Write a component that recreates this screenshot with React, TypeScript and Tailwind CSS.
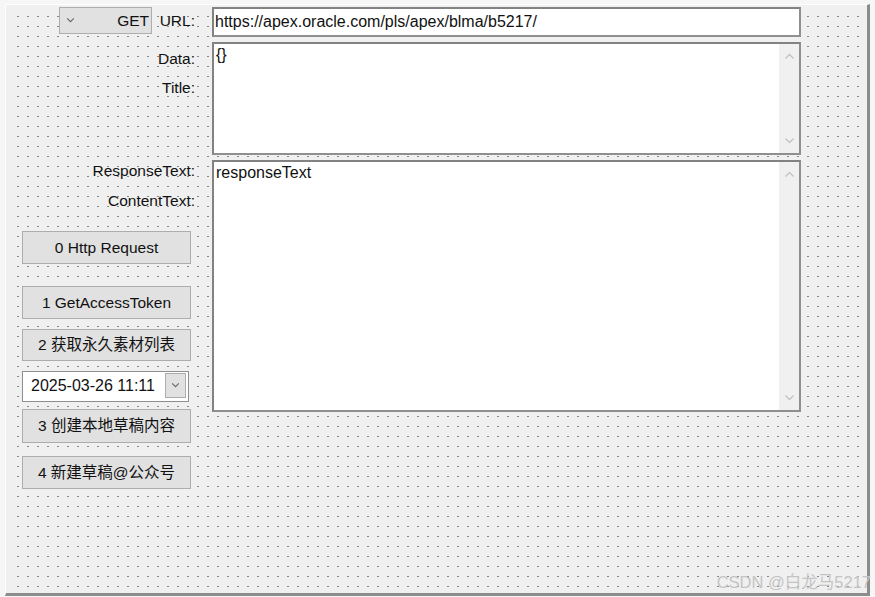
import React from 'react';

// Delphi-style form designer canvas

function Chevron({ up = false, className = '' }: { up?: boolean; className?: string }) {
    return (
        <svg viewBox="0 0 10 6" className={className} fill="none" stroke="currentColor" strokeWidth="1.3">
            {up ? <path d="M1 5.5 L5 1.5 L9 5.5" /> : <path d="M1 0.5 L5 4.5 L9 0.5" />}
        </svg>
    );
}

function Label({ text, className = '' }: { text: string; className?: string }) {
    return <div className={`h-[20px] text-right leading-[20px] ${className}`}>{text}</div>;
}

function Button({ text, className = '' }: { text: string; className?: string }) {
    return (
        <div
            className={`flex w-[169px] items-center justify-center border border-[#adadad] bg-[#e1e1e1] ${className}`}
        >
            {text}
        </div>
    );
}

function Memo({ text, className = '' }: { text: string; className?: string }) {
    return (
        <div
            className={`flex border-2 border-[#8f8f8f] border-t-[#828282] border-l-[#828282] bg-white ${className}`}
        >
            <div className="flex-1 pl-[2px] pt-[2px] text-[16px] leading-[18px]">{text}</div>
            <div className="flex w-[20px] flex-col items-center justify-between bg-[#f0f0f0] py-[9px] text-[#c2c2c2]">
                <Chevron up className="h-[6px] w-[11px]" />
                <Chevron className="h-[6px] w-[11px]" />
            </div>
        </div>
    );
}

export default function App() {
    return (
        <div className="relative h-[597px] w-[875px] bg-[#f6f6f6] pl-[5px] pt-[4px] font-['Liberation_Sans','Noto_Sans_CJK_SC',sans-serif] text-[15.5px] text-[#111111]">
            <div className="flex h-[592px] w-[865px] gap-[17px] border-l border-t border-r-[3px] border-b-[3px] border-l-white border-t-white border-r-[#8c8c8c] border-b-[#8c8c8c] pl-[16px] pt-[2px] [background:linear-gradient(#f0f0f0,#f0f0f0)_0_0/11px_100%_no-repeat,linear-gradient(#f0f0f0,#f0f0f0)_0_0/100%_11px_no-repeat,conic-gradient(from_270deg_at_2px_1px,#888888_90deg,transparent_0)_11px_11px/10px_10px,#f0f0f0]">
                {/* Left column */}
                <div className="flex w-[173px] flex-col">
                    <div className="flex h-[30px] items-start">
                        <div className="ml-[37px] flex h-[27px] w-[93px] items-center justify-between border border-[#adadad] bg-[#e1e1e1] pl-[6px] pr-[2px]">
                            <Chevron className="h-[5px] w-[9px] text-[#666666]" />
                            <span>GET</span>
                        </div>
                        <div className="flex-1 text-right leading-[27px]">URL:</div>
                    </div>
                    <Label text="Data:" className="mt-[12px]" />
                    <Label text="Title:" className="mt-[9px]" />
                    <Label text="ResponseText:" className="mt-[63px]" />
                    <Label text="ContentText:" className="mt-[10px]" />
                    <Button text="0 Http Request" className="mt-[20px] h-[33px]" />
                    <Button text="1 GetAccessToken" className="mt-[22px] h-[33px]" />
                    <Button text="2 获取永久素材列表" className="mt-[10px] h-[32px]" />
                    <div className="mt-[10px] flex h-[31px] w-[167px] items-center border border-[#8f8f8f] bg-white pb-[2px] pl-[8px] pr-[2px] text-[16px]">
                        <span className="flex-1">2025-03-26 11:11</span>
                        <div className="flex h-[25px] w-[21px] items-center justify-center border border-[#adadad] bg-[#e1e1e1] text-[#666666]">
                            <Chevron className="h-[5px] w-[9px]" />
                        </div>
                    </div>
                    <Button text="3 创建本地草稿内容" className="mt-[7px] h-[34px]" />
                    <Button text="4 新建草稿@公众号" className="mt-[13px] h-[33px]" />
                </div>

                {/* Right column */}
                <div className="flex w-[589px] flex-col">
                    <div className="flex h-[30px] items-center border-2 border-[#8f8f8f] border-t-[#828282] border-l-[#828282] bg-white pl-[1px] text-[16px]">
                        https://apex.oracle.com/pls/apex/blma/b5217/
                    </div>
                    <Memo text="{}" className="mt-[5px] h-[113px]" />
                    <Memo text="responseText" className="mt-[5px] h-[252px]" />
                </div>
            </div>

            <div className="absolute bottom-[6px] right-[4px] text-[16.5px] leading-[18px] text-[#c4c4c4]">
                CSDN @白龙马5217
            </div>
        </div>
    );
}
